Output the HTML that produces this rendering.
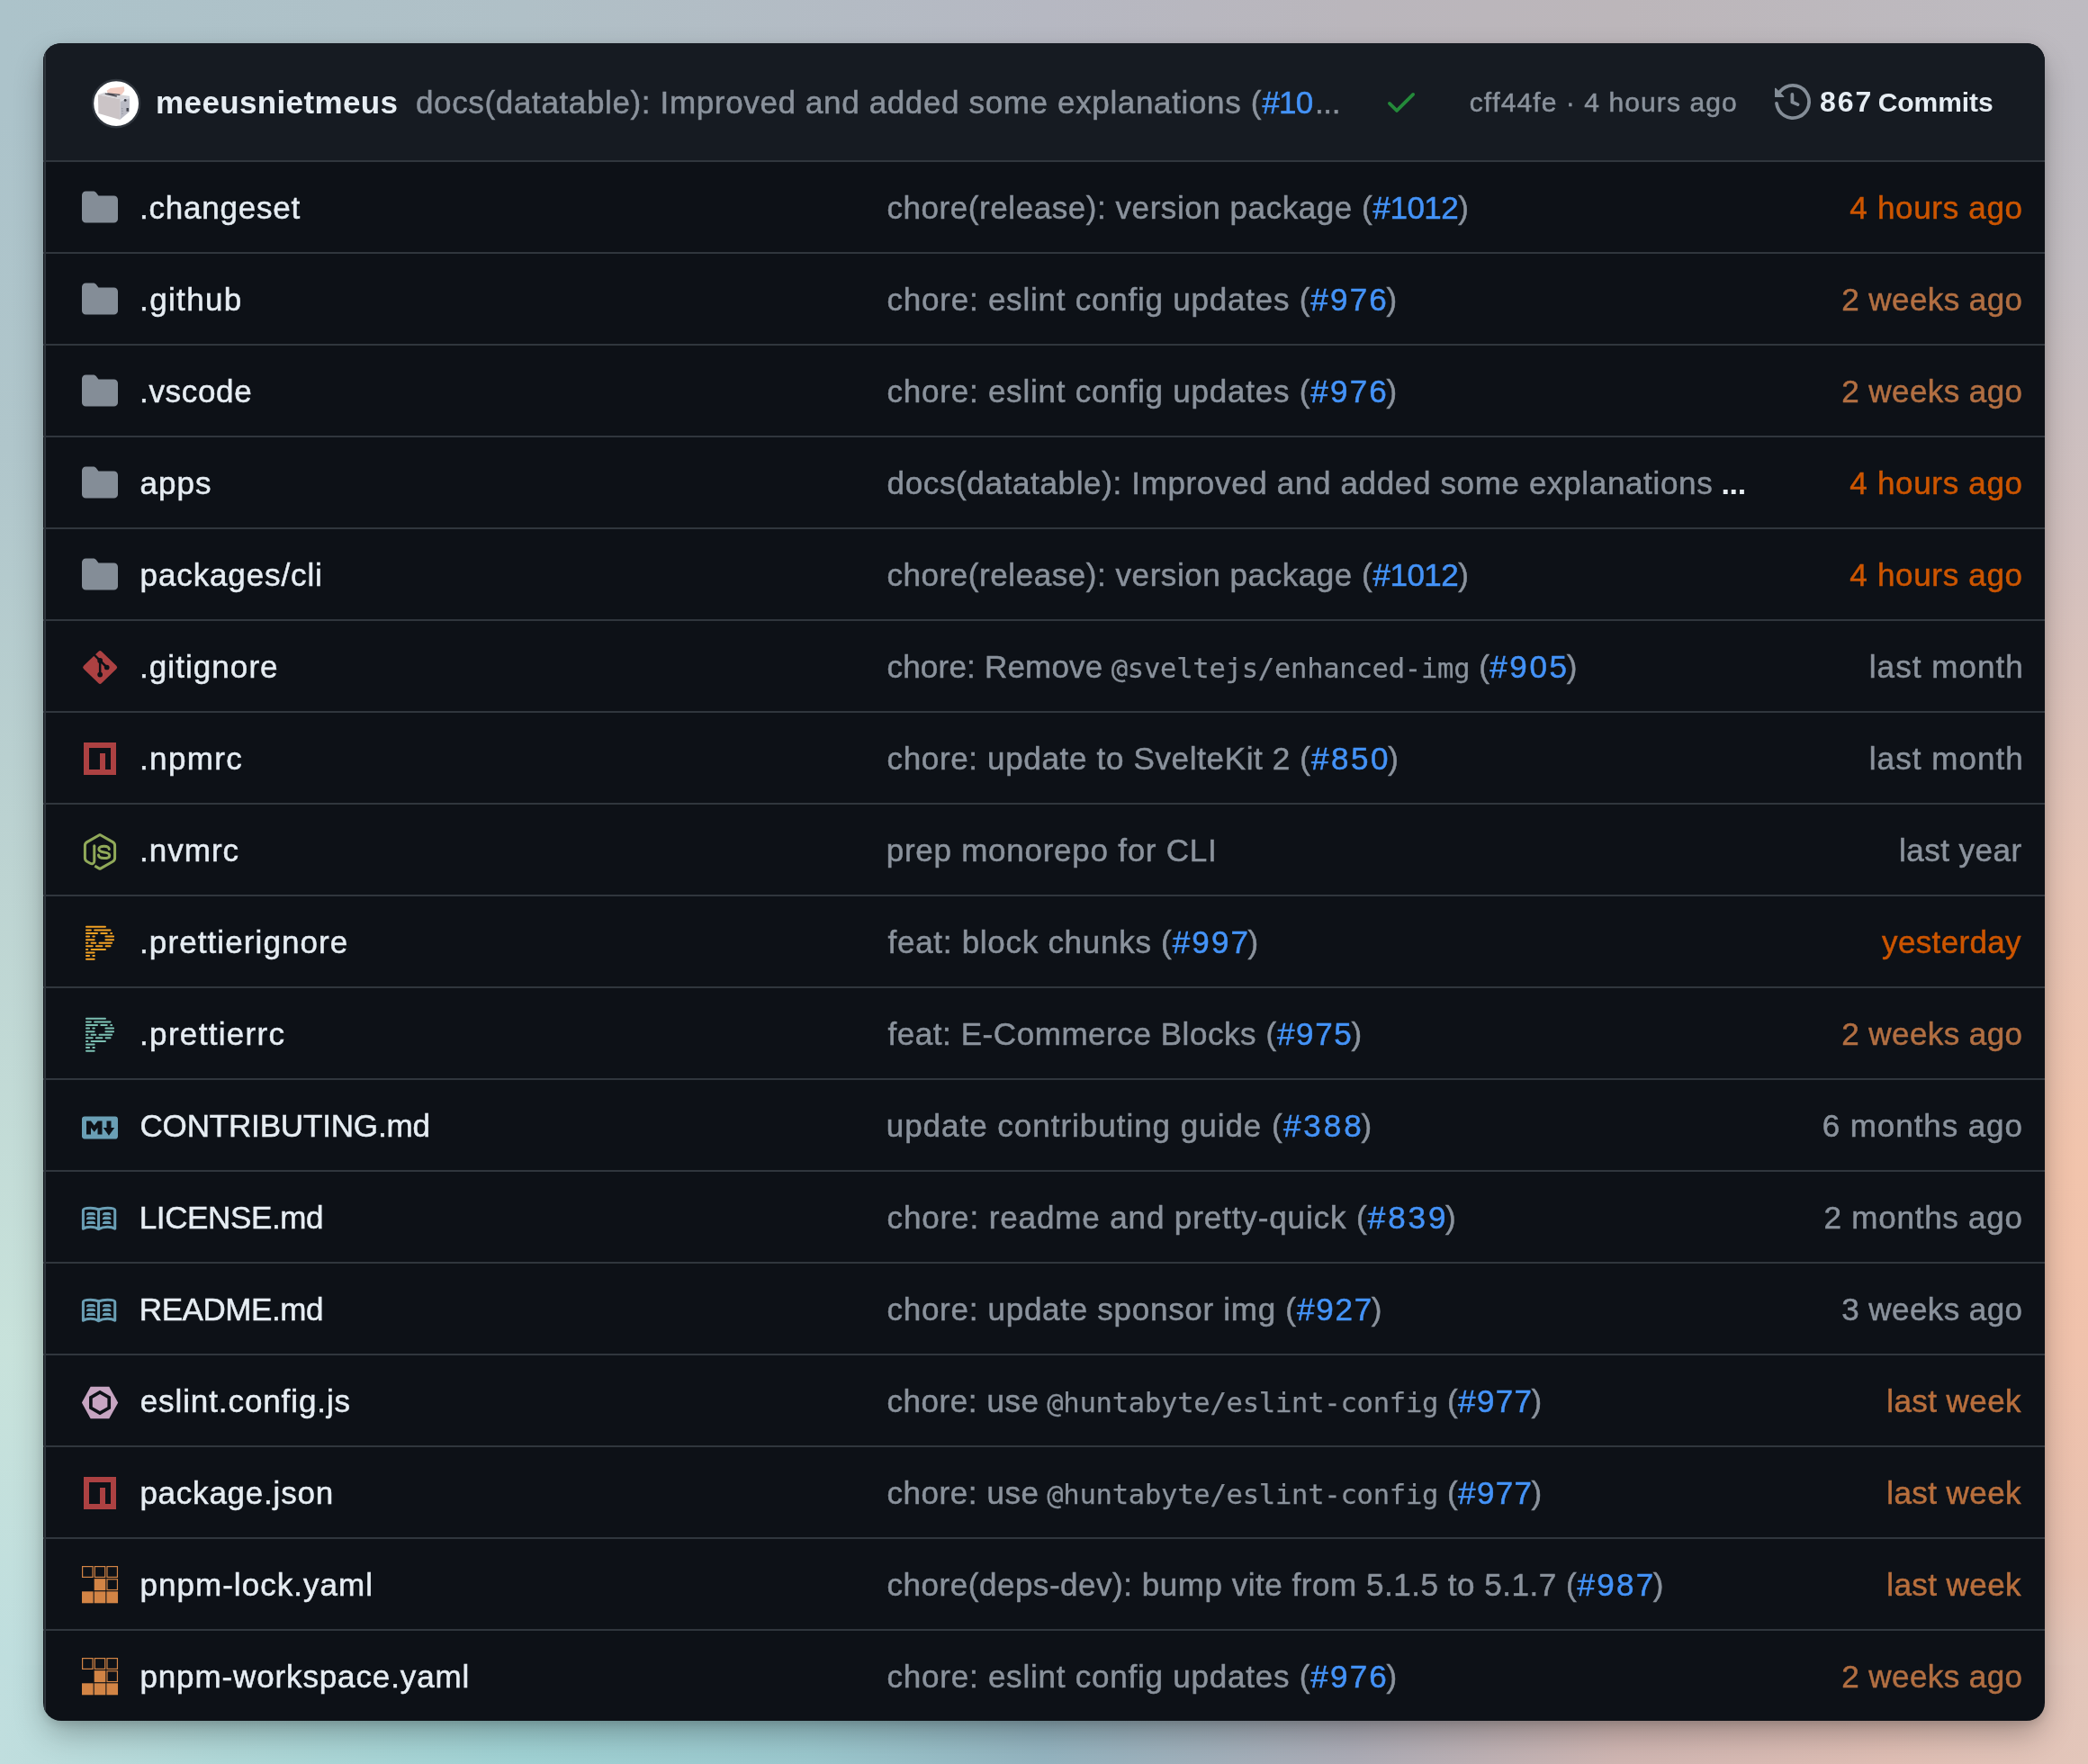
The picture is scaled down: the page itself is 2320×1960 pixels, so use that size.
<!DOCTYPE html>
<html lang="en"><head><meta charset="utf-8"><title>shadcn-svelte files</title>
<style>
html,body{margin:0;padding:0}
body{width:2320px;height:1960px;overflow:hidden;position:relative;font-family:"Liberation Sans",sans-serif;font-kerning:none;-webkit-font-smoothing:antialiased;
background-color:#b6bcc4;
background-image:
linear-gradient(to right,rgb(172,195,202) 0.0%,rgb(176,192,199) 25.0%,rgb(182,184,194) 50.0%,rgb(186,182,188) 64.7%,rgb(188,182,186) 77.6%,rgb(190,187,193) 100.0%),
linear-gradient(to right,rgb(192,222,222) 0.0%,rgb(176,216,216) 10.8%,rgb(160,210,212) 25.0%,rgb(155,200,206) 38.8%,rgb(148,180,192) 50.0%,rgb(172,172,182) 64.7%,rgb(208,182,178) 77.6%,rgb(223,190,180) 90.5%,rgb(227,198,186) 100.0%),
linear-gradient(to bottom,rgb(172,195,202) 0.0%,rgb(172,195,202) 5.9%,rgb(176,198,203) 25.5%,rgb(189,212,210) 50.0%,rgb(200,226,219) 76.5%,rgb(191,222,222) 94.1%,rgb(191,222,222) 100.0%),
linear-gradient(to bottom,rgb(190,187,193) 0.0%,rgb(190,187,193) 5.9%,rgb(196,190,194) 15.3%,rgb(210,192,190) 30.6%,rgb(232,197,182) 50.0%,rgb(242,196,172) 66.3%,rgb(240,194,172) 76.5%,rgb(232,193,176) 89.3%,rgb(227,198,186) 94.1%,rgb(227,198,186) 100.0%);
background-repeat:no-repeat;
background-size:100% 110px,100% 110px,120px 100%,120px 100%;
background-position:0 0,0 100%,0 0,100% 0;
}
.card{will-change:transform;position:absolute;left:48px;top:48px;width:2224px;height:1864px;border-radius:20px;background:#0d1117;overflow:hidden;box-shadow:0 16px 36px -4px rgba(0,0,0,.30),0 3px 12px rgba(0,0,0,.12)}
.card::before{content:"";position:absolute;left:1px;top:0;bottom:0;width:2px;background:#30363d;z-index:3}
.hdr{position:relative;height:130px;background:#161b22}
.row{position:relative;height:100px;border-top:2px solid #30363d;color:#8a929c}
.ic{position:absolute;display:block;overflow:visible}
.nm,.mg,.tm,.hn,.hm,.hs,.hc{position:absolute;top:1px;white-space:pre;font-size:35px;line-height:100px;height:100px;text-decoration:none}
.nm,.mg,.tm,.hm,.hs{-webkit-text-stroke:.5px}
.nm{color:#e6edf3}
.mg{color:#8a929c}
.lk{color:#4493f8;text-decoration:none}
.el{color:#e6edf3;font-weight:bold;font-size:34px;line-height:0;-webkit-text-stroke:0}
code{font-family:"DejaVu Sans Mono","Liberation Mono",monospace;font-size:30.5px;line-height:0;-webkit-text-stroke:.25px}
.hn{color:#e6edf3;font-weight:bold;top:16px}
.hm{color:#8a929c;top:16px}
.hs{color:#8a929c;font-size:30px;top:16px}
.hc{color:#e6edf3;font-size:30px;font-weight:bold;top:16px}
.dg{font-size:32px;line-height:0}
</style></head>
<body>
<div class="card">
<div class="hdr"><svg class="ic" style="left:52.8px;top:38.8px" width="56" height="56" viewBox="0 0 56 56"><circle cx="28.1" cy="28.1" r="26.1" fill="#fff" stroke="#2f353d" stroke-width="2.4"/><path d="M17.6 13.7L21.8 10.9L36.9 9.3L37.3 14.1L33.8 18.6L19 16.9Z" fill="#f2cdc2"/><path d="M7.9 18.3L15.5 15.8L42.9 19.7L32.7 23.2Z" fill="#d6d5d9"/><path d="M7.9 18.3L32.7 23.2L32.3 46.1L8.4 39Z" fill="#cbc4c6"/><path d="M32.7 23.2L42.9 19.7L42.9 36.9L32.3 46.1Z" fill="#b9bac4"/><path d="M32.7 23.4L42.9 19.9L42.9 22.3L32.7 25.9Z" fill="#d9dbe2"/><path d="M15.8 17.2L28.8 20M18.3 16.9L32.3 18.4" stroke="#4b4a52" stroke-width="1.3" fill="none"/><circle cx="38.2" cy="24.4" r="1.4" fill="#3b3d46"/><rect x="39.5" y="33" width="2.4" height="3.7" fill="#3f414a"/><path d="M34.8 33v1.2M35 35.8v1.2M35 38.6v1.2" stroke="#8e8f99" stroke-width="1.1"/></svg><a class="hn" style="left:125.09px;letter-spacing:0.36px;">meeusnietmeus</a><span class="hm" style="left:414.03px;"><span style="letter-spacing:0.64px">docs(datatable): Improved and added some explanations</span><span style="letter-spacing:0.76px"> (</span><a class="lk" style="letter-spacing:-0.79px;margin-left:0.25px">#10</a><span style="letter-spacing:-0.29px;margin-left:2.42px">...</span></span><svg class="ic" style="left:1488.7px;top:45px" width="40" height="40" viewBox="0 0 16 16"><path fill="#248a3a" d="M13.78 4.22a.75.75 0 0 1 0 1.06l-7.25 7.25a.75.75 0 0 1-1.06 0L2.22 9.28a.751.751 0 0 1 .018-1.042.751.751 0 0 1 1.042-.018L6 10.94l6.72-6.72a.75.75 0 0 1 1.06 0Z"/></svg><span class="hs" style="left:1584.73px;letter-spacing:1.09px;">cff44fe · 4 hours ago</span><svg class="ic" style="left:1924px;top:45px" width="40" height="40" viewBox="0 0 16 16"><path fill="#848d97" d="m.427 1.927 1.215 1.215a8.002 8.002 0 1 1-1.6 5.685.75.75 0 1 1 1.493-.154 6.5 6.5 0 1 0 1.18-4.458l1.358 1.358A.25.25 0 0 1 3.896 6H.25A.25.25 0 0 1 0 5.75V2.104a.25.25 0 0 1 .427-.177ZM7.75 4a.75.75 0 0 1 .75.75v2.992l2.028.812a.75.75 0 0 1-.557 1.392l-2.5-1A.751.751 0 0 1 7 8.25v-3.5A.75.75 0 0 1 7.75 4Z"/></svg><a class="hc" style="left:1973.88px;"><span class="dg" style="letter-spacing:1.97px">867</span><span style="letter-spacing:-2.84px"> </span><span style="letter-spacing:-0.06px">Commits</span></a></div>
<div class="row"><svg class="ic" style="left:43px;top:30.3px" width="40" height="40" viewBox="0 0 16 16"><path fill="#848d97" d="M1.75 1A1.75 1.75 0 0 0 0 2.75v10.5C0 14.216.784 15 1.75 15h12.5A1.75 1.75 0 0 0 16 13.25v-8.5A1.75 1.75 0 0 0 14.25 3H7.5a.25.25 0 0 1-.2-.1l-.9-1.2C6.07 1.26 5.55 1 5 1H1.75Z"/></svg><a class="nm" style="left:107.05px;letter-spacing:0.76px;">.changeset</a><span class="mg" style="left:937.51px;"><span style="letter-spacing:0.56px">chore(release): version package (</span><a class="lk" style="letter-spacing:-0.55px;margin-left:0.25px">#1012</a><span style="letter-spacing:-0.55px;margin-left:0.01px">)</span></span><span class="tm" style="left:2007.35px;color:#cc5500;letter-spacing:0.68px;">4 hours ago</span></div>
<div class="row"><svg class="ic" style="left:43px;top:30.3px" width="40" height="40" viewBox="0 0 16 16"><path fill="#848d97" d="M1.75 1A1.75 1.75 0 0 0 0 2.75v10.5C0 14.216.784 15 1.75 15h12.5A1.75 1.75 0 0 0 16 13.25v-8.5A1.75 1.75 0 0 0 14.25 3H7.5a.25.25 0 0 1-.2-.1l-.9-1.2C6.07 1.26 5.55 1 5 1H1.75Z"/></svg><a class="nm" style="left:107.05px;letter-spacing:1.36px;">.github</a><span class="mg" style="left:937.51px;"><span style="letter-spacing:0.77px">chore: eslint config updates (</span><a class="lk" style="letter-spacing:2.21px;margin-left:0.25px">#976</a><span style="letter-spacing:2.21px;margin-left:-2.53px">)</span></span><span class="tm" style="left:1998.29px;color:#b26f42;letter-spacing:0.42px;">2 weeks ago</span></div>
<div class="row"><svg class="ic" style="left:43px;top:30.3px" width="40" height="40" viewBox="0 0 16 16"><path fill="#848d97" d="M1.75 1A1.75 1.75 0 0 0 0 2.75v10.5C0 14.216.784 15 1.75 15h12.5A1.75 1.75 0 0 0 16 13.25v-8.5A1.75 1.75 0 0 0 14.25 3H7.5a.25.25 0 0 1-.2-.1l-.9-1.2C6.07 1.26 5.55 1 5 1H1.75Z"/></svg><a class="nm" style="left:107.05px;letter-spacing:0.66px;">.vscode</a><span class="mg" style="left:937.51px;"><span style="letter-spacing:0.77px">chore: eslint config updates (</span><a class="lk" style="letter-spacing:2.21px;margin-left:0.25px">#976</a><span style="letter-spacing:2.21px;margin-left:-2.53px">)</span></span><span class="tm" style="left:1998.29px;color:#b26f42;letter-spacing:0.42px;">2 weeks ago</span></div>
<div class="row"><svg class="ic" style="left:43px;top:30.3px" width="40" height="40" viewBox="0 0 16 16"><path fill="#848d97" d="M1.75 1A1.75 1.75 0 0 0 0 2.75v10.5C0 14.216.784 15 1.75 15h12.5A1.75 1.75 0 0 0 16 13.25v-8.5A1.75 1.75 0 0 0 14.25 3H7.5a.25.25 0 0 1-.2-.1l-.9-1.2C6.07 1.26 5.55 1 5 1H1.75Z"/></svg><a class="nm" style="left:107.46px;letter-spacing:1.05px;">apps</a><span class="mg" style="left:937.53px;"><span style="letter-spacing:0.65px">docs(datatable): Improved and added some explanations</span><span style="letter-spacing:-0.59px"> </span><span class="el" style="letter-spacing:-0.35px">...</span></span><span class="tm" style="left:2007.35px;color:#cc5500;letter-spacing:0.68px;">4 hours ago</span></div>
<div class="row"><svg class="ic" style="left:43px;top:30.3px" width="40" height="40" viewBox="0 0 16 16"><path fill="#848d97" d="M1.75 1A1.75 1.75 0 0 0 0 2.75v10.5C0 14.216.784 15 1.75 15h12.5A1.75 1.75 0 0 0 16 13.25v-8.5A1.75 1.75 0 0 0 14.25 3H7.5a.25.25 0 0 1-.2-.1l-.9-1.2C6.07 1.26 5.55 1 5 1H1.75Z"/></svg><a class="nm" style="left:107.59px;letter-spacing:0.88px;">packages/cli</a><span class="mg" style="left:937.51px;"><span style="letter-spacing:0.56px">chore(release): version package (</span><a class="lk" style="letter-spacing:-0.55px;margin-left:0.25px">#1012</a><span style="letter-spacing:-0.55px;margin-left:0.01px">)</span></span><span class="tm" style="left:2007.35px;color:#cc5500;letter-spacing:0.68px;">4 hours ago</span></div>
<div class="row"><svg class="ic" style="left:43px;top:30px" width="40" height="42" viewBox="0 0 40 42"><rect x="-14.15" y="-14.15" width="28.3" height="28.3" rx="2.6" fill="#ac4142" transform="translate(20.15 21.5) scale(1 .965) rotate(45)"/><path d="M13.55 7.3 L27.7 21.5 M20.15 13.95 L20.15 29.6" stroke="#0d1117" stroke-width="2.5" fill="none"/><circle cx="20.15" cy="13.95" r="2.85" fill="#0d1117"/><circle cx="27.7" cy="21.5" r="2.85" fill="#0d1117"/><circle cx="20.15" cy="29.6" r="2.85" fill="#0d1117"/></svg><a class="nm" style="left:107.05px;letter-spacing:1.06px;">.gitignore</a><span class="mg" style="left:937.51px;"><span style="letter-spacing:0.2px">chore: Remove</span><span style="letter-spacing:-0.63px"> </span><code style="letter-spacing:-0.24px;margin-left:0.12px">@sveltejs/enhanced-img</code><span style="letter-spacing:0.14px"> (</span><a class="lk" style="letter-spacing:2.59px;margin-left:0.25px">#905</a><span style="letter-spacing:2.59px;margin-left:-2.84px">)</span></span><span class="tm" style="left:2028.79px;color:#8a929c;letter-spacing:1.06px;">last month</span></div>
<div class="row"><svg class="ic" style="left:45.1px;top:33.4px" width="36" height="36" viewBox="0 0 36 36"><path fill="#ac4142" fill-rule="evenodd" d="M0 0h36v36H0zM6 6v24h12V12h6v18h6V6z"/></svg><a class="nm" style="left:107.05px;letter-spacing:1.33px;">.npmrc</a><span class="mg" style="left:937.51px;"><span style="letter-spacing:0.66px">chore: update to SvelteKit 2 (</span><a class="lk" style="letter-spacing:2.52px;margin-left:0.25px">#850</a><span style="letter-spacing:2.52px;margin-left:-2.67px">)</span></span><span class="tm" style="left:2028.79px;color:#8a929c;letter-spacing:1.06px;">last month</span></div>
<div class="row"><svg class="ic" style="left:43px;top:30px" width="40" height="45" viewBox="0 0 40 45"><g transform="translate(20 22.4)" fill="none" stroke="#90a959" stroke-width="3" stroke-linejoin="round"><path d="M-5.70 15.70 L-0.52 18.70 Q0.00 19.00 0.52 18.70 L14.34 10.79 Q16.60 9.50 16.60 6.90 L16.60 -6.90 Q16.60 -9.50 14.34 -10.79 L0.52 -18.70 Q0.00 -19.00 -0.52 -18.70 L-14.34 -10.79 Q-16.60 -9.50 -16.60 -6.90 L-16.60 6.90 Q-16.60 9.50 -14.35 10.80 L -10.8 12.86 C -8.6 14.1 -6.2 13.2 -6.2 10 L -6.2 -6.4"/><path d="M 10.3 -2.9 C 10.1 -5.2 7.9 -6.2 4.6 -6.2 C 1.3 -6.2 -1.2 -5.1 -1.2 -2.9 C -1.2 -0.6 1 0 4.6 0.5 C 8.4 1 10.7 1.7 10.7 4 C 10.7 6.2 8.3 7.2 4.6 7.2 C 1 7.2 -1.5 6.1 -1.6 3.5" stroke-linecap="round"/><circle cx="-6.2" cy="-6.6" r="1.5" fill="#90a959" stroke="none"/></g></svg><a class="nm" style="left:107.05px;letter-spacing:1px;">.nvmrc</a><span class="mg" style="left:936.74px;letter-spacing:0.74px;">prep monorepo for CLI</span><span class="tm" style="left:2061.99px;color:#8a929c;letter-spacing:0.48px;">last year</span></div>
<div class="row"><svg class="ic" style="left:43px;top:30px" width="40" height="42" viewBox="0 0 40 42"><path d="M4.98 3.84H26.00M4.98 7.42H9.92M14.11 7.42H31.55M4.98 11.01H17.07M21.25 11.01H27.78M32.16 11.01H33.14M4.98 14.59H8.14M12.32 14.59H13.89M26.41 14.59H35.12M4.98 18.17H13.69M26.41 18.17H35.12M4.98 21.76H6.35M10.54 21.76H15.28M19.47 21.76H33.14M4.98 25.34H11.71M15.89 25.34H22.42M26.61 25.34H31.55M4.98 28.92H6.35M10.54 28.92H26.00M4.98 32.51H13.69M4.98 36.09H8.14M12.32 36.09H13.89M4.98 39.67H13.69" stroke="#f2a124" stroke-width="1.95" stroke-linecap="round" fill="none"/></svg><a class="nm" style="left:107.05px;letter-spacing:1.09px;">.prettierignore</a><span class="mg" style="left:938.5px;"><span style="letter-spacing:0.72px">feat: block chunks (</span><a class="lk" style="letter-spacing:2.15px;margin-left:0.25px">#997</a><span style="letter-spacing:2.15px;margin-left:-2.7px">)</span></span><span class="tm" style="left:2043.06px;color:#cc5500;letter-spacing:0.35px;">yesterday</span></div>
<div class="row"><svg class="ic" style="left:43px;top:30px" width="40" height="42" viewBox="0 0 40 42"><path d="M4.98 3.84H26.00M4.98 7.42H9.92M14.11 7.42H31.55M4.98 11.01H17.07M21.25 11.01H27.78M32.16 11.01H33.14M4.98 14.59H8.14M12.32 14.59H13.89M26.41 14.59H35.12M4.98 18.17H13.69M26.41 18.17H35.12M4.98 21.76H6.35M10.54 21.76H15.28M19.47 21.76H33.14M4.98 25.34H11.71M15.89 25.34H22.42M26.61 25.34H31.55M4.98 28.92H6.35M10.54 28.92H26.00M4.98 32.51H13.69M4.98 36.09H8.14M12.32 36.09H13.89M4.98 39.67H13.69" stroke="#7cc0b3" stroke-width="1.95" stroke-linecap="round" fill="none"/></svg><a class="nm" style="left:107.05px;letter-spacing:1.32px;">.prettierrc</a><span class="mg" style="left:938.5px;"><span style="letter-spacing:0.56px">feat: E-Commerce Blocks (</span><a class="lk" style="letter-spacing:1.65px;margin-left:0.25px">#975</a><span style="letter-spacing:1.65px;margin-left:-1.91px">)</span></span><span class="tm" style="left:1998.29px;color:#b26f42;letter-spacing:0.42px;">2 weeks ago</span></div>
<div class="row"><svg class="ic" style="left:43px;top:33px" width="40" height="40" viewBox="0 0 16 16"><path fill="#6a9fb5" fill-rule="evenodd" d="M14.85 3H1.15C.52 3 0 3.52 0 4.15v7.69C0 12.48.52 13 1.15 13h13.69c.64 0 1.15-.52 1.15-1.15v-7.7C16 3.52 15.48 3 14.85 3zM9 11H7V8L5.5 9.92 4 8v3H2V5h2l1.5 2L7 5h2v6zm2.99.5L9.5 8H11V5h2v3h1.5l-2.51 3.5z"/></svg><a class="nm" style="left:107.47px;letter-spacing:-0.16px;">CONTRIBUTING.md</a><span class="mg" style="left:936.73px;"><span style="letter-spacing:0.98px">update contributing guide (</span><a class="lk" style="letter-spacing:2.97px;margin-left:0.25px">#388</a><span style="letter-spacing:2.97px;margin-left:-3.28px">)</span></span><span class="tm" style="left:1976.77px;color:#8a929c;letter-spacing:0.92px;">6 months ago</span></div>
<div class="row"><svg class="ic" style="left:42px;top:36px" width="42" height="32" viewBox="0 0 42 32"><path d="M2.38 27.25 V6.69 Q2.38 4.16 10.63 4.16 Q16.19 4.16 19.56 5.83 V27.65 Q16.19 25.27 10.63 25.27 Q5.08 25.27 2.38 27.25 Z M37.74 27.25 V6.69 Q37.74 4.16 29.48 4.16 Q23.73 4.16 19.56 5.83 V27.65 Q23.73 25.27 29.48 25.27 Q34.84 25.27 37.74 27.25 Z" fill="none" stroke="#6a9fb5" stroke-width="3" stroke-linejoin="round"/><path d="M5.87 12.13 Q6.37 8.88 8.87 8.88 H13.19 Q15.69 8.88 16.19 12.13 Z" fill="#6a9fb5"/><path d="M5.87 17.10 Q6.37 13.84 8.87 13.84 H13.19 Q15.69 13.84 16.19 17.10 Z" fill="#6a9fb5"/><path d="M5.87 22.06 Q6.37 18.80 8.87 18.80 H13.19 Q15.69 18.80 16.19 22.06 Z" fill="#6a9fb5"/><path d="M23.73 12.13 Q24.23 8.88 26.73 8.88 H30.57 Q33.07 8.88 33.57 12.13 Z" fill="#6a9fb5"/><path d="M23.73 17.10 Q24.23 13.84 26.73 13.84 H30.57 Q33.07 13.84 33.57 17.10 Z" fill="#6a9fb5"/><path d="M23.73 22.06 Q24.23 18.80 26.73 18.80 H30.57 Q33.07 18.80 33.57 22.06 Z" fill="#6a9fb5"/></svg><a class="nm" style="left:106.78px;letter-spacing:-0.37px;">LICENSE.md</a><span class="mg" style="left:937.51px;"><span style="letter-spacing:0.88px">chore: readme and pretty-quick (</span><a class="lk" style="letter-spacing:2.98px;margin-left:0.25px">#839</a><span style="letter-spacing:2.98px;margin-left:-3.43px">)</span></span><span class="tm" style="left:1978.59px;color:#8a929c;letter-spacing:0.76px;">2 months ago</span></div>
<div class="row"><svg class="ic" style="left:42px;top:36px" width="42" height="32" viewBox="0 0 42 32"><path d="M2.38 27.25 V6.69 Q2.38 4.16 10.63 4.16 Q16.19 4.16 19.56 5.83 V27.65 Q16.19 25.27 10.63 25.27 Q5.08 25.27 2.38 27.25 Z M37.74 27.25 V6.69 Q37.74 4.16 29.48 4.16 Q23.73 4.16 19.56 5.83 V27.65 Q23.73 25.27 29.48 25.27 Q34.84 25.27 37.74 27.25 Z" fill="none" stroke="#6a9fb5" stroke-width="3" stroke-linejoin="round"/><path d="M5.87 12.13 Q6.37 8.88 8.87 8.88 H13.19 Q15.69 8.88 16.19 12.13 Z" fill="#6a9fb5"/><path d="M5.87 17.10 Q6.37 13.84 8.87 13.84 H13.19 Q15.69 13.84 16.19 17.10 Z" fill="#6a9fb5"/><path d="M5.87 22.06 Q6.37 18.80 8.87 18.80 H13.19 Q15.69 18.80 16.19 22.06 Z" fill="#6a9fb5"/><path d="M23.73 12.13 Q24.23 8.88 26.73 8.88 H30.57 Q33.07 8.88 33.57 12.13 Z" fill="#6a9fb5"/><path d="M23.73 17.10 Q24.23 13.84 26.73 13.84 H30.57 Q33.07 13.84 33.57 17.10 Z" fill="#6a9fb5"/><path d="M23.73 22.06 Q24.23 18.80 26.73 18.80 H30.57 Q33.07 18.80 33.57 22.06 Z" fill="#6a9fb5"/></svg><a class="nm" style="left:106.78px;letter-spacing:-0.41px;">README.md</a><span class="mg" style="left:937.51px;"><span style="letter-spacing:0.72px">chore: update sponsor img (</span><a class="lk" style="letter-spacing:1.82px;margin-left:0.25px">#927</a><span style="letter-spacing:1.82px;margin-left:-2.36px">)</span></span><span class="tm" style="left:1998.32px;color:#8a929c;letter-spacing:0.42px;">3 weeks ago</span></div>
<div class="row"><svg class="ic" style="left:42px;top:30px" width="42" height="42" viewBox="0 0 42 42"><path d="M0.91 22.50 L10.63 4.64 L31.27 4.64 L41.19 22.50 L31.27 40.16 L10.63 40.16Z" fill="#c7a5c2"/><path d="M21.03 8.81 L33.06 15.63 L33.06 29.25 L21.03 36.19 L9.05 29.25 L9.05 15.63Z" fill="#0d1117"/><path d="M21.03 13.02 L29.37 17.74 L29.37 27.14 L21.03 31.94 L12.74 27.14 L12.74 17.74Z" fill="#c7a5c2"/></svg><a class="nm" style="left:107.76px;letter-spacing:0.9px;">eslint.config.js</a><span class="mg" style="left:937.51px;"><span style="letter-spacing:0.56px">chore: use</span><span style="letter-spacing:-1.19px"> </span><code style="letter-spacing:-0.24px;margin-left:0.12px">@huntabyte/eslint-config</code><span style="letter-spacing:0.14px"> (</span><a class="lk" style="letter-spacing:1.38px;margin-left:0.25px">#977</a><span style="letter-spacing:1.38px;margin-left:-1.93px">)</span></span><span class="tm" style="left:2048.19px;color:#b86f3d;letter-spacing:0.43px;">last week</span></div>
<div class="row"><svg class="ic" style="left:45.1px;top:33.4px" width="36" height="36" viewBox="0 0 36 36"><path fill="#ac4142" fill-rule="evenodd" d="M0 0h36v36H0zM6 6v24h12V12h6v18h6V6z"/></svg><a class="nm" style="left:107.39px;letter-spacing:0.77px;">package.json</a><span class="mg" style="left:937.51px;"><span style="letter-spacing:0.56px">chore: use</span><span style="letter-spacing:-1.19px"> </span><code style="letter-spacing:-0.24px;margin-left:0.12px">@huntabyte/eslint-config</code><span style="letter-spacing:0.14px"> (</span><a class="lk" style="letter-spacing:1.38px;margin-left:0.25px">#977</a><span style="letter-spacing:1.38px;margin-left:-1.93px">)</span></span><span class="tm" style="left:2048.19px;color:#b86f3d;letter-spacing:0.43px;">last week</span></div>
<div class="row"><svg class="ic" style="left:42.9px;top:29.9px" width="40.4" height="41.2" viewBox="0 0 40.4 41.2"><rect x="0.60" y="0.60" width="11.45" height="11.80" fill="none" stroke="#d28445" stroke-width="1.2"/><rect x="14.30" y="0.60" width="11.45" height="11.80" fill="none" stroke="#d28445" stroke-width="1.2"/><rect x="28.00" y="0.60" width="11.45" height="11.80" fill="none" stroke="#d28445" stroke-width="1.2"/><rect x="13.70" y="14.15" width="12.65" height="13.00" fill="#d28445"/><rect x="28.00" y="14.75" width="11.45" height="11.80" fill="none" stroke="#d28445" stroke-width="1.2"/><rect x="0.00" y="28.30" width="12.65" height="13.00" fill="#d28445"/><rect x="13.70" y="28.30" width="12.65" height="13.00" fill="#d28445"/><rect x="27.40" y="28.30" width="12.65" height="13.00" fill="#d28445"/></svg><a class="nm" style="left:107.39px;letter-spacing:1.05px;">pnpm-lock.yaml</a><span class="mg" style="left:937.51px;"><span style="letter-spacing:0.53px">chore(deps-dev): bump vite from 5.1.5 to 5.1.7 (</span><a class="lk" style="letter-spacing:2.35px;margin-left:0.25px">#987</a><span style="letter-spacing:2.35px;margin-left:-2.9px">)</span></span><span class="tm" style="left:2048.19px;color:#b86f3d;letter-spacing:0.43px;">last week</span></div>
<div class="row"><svg class="ic" style="left:42.9px;top:29.9px" width="40.4" height="41.2" viewBox="0 0 40.4 41.2"><rect x="0.60" y="0.60" width="11.45" height="11.80" fill="none" stroke="#d28445" stroke-width="1.2"/><rect x="14.30" y="0.60" width="11.45" height="11.80" fill="none" stroke="#d28445" stroke-width="1.2"/><rect x="28.00" y="0.60" width="11.45" height="11.80" fill="none" stroke="#d28445" stroke-width="1.2"/><rect x="13.70" y="14.15" width="12.65" height="13.00" fill="#d28445"/><rect x="28.00" y="14.75" width="11.45" height="11.80" fill="none" stroke="#d28445" stroke-width="1.2"/><rect x="0.00" y="28.30" width="12.65" height="13.00" fill="#d28445"/><rect x="13.70" y="28.30" width="12.65" height="13.00" fill="#d28445"/><rect x="27.40" y="28.30" width="12.65" height="13.00" fill="#d28445"/></svg><a class="nm" style="left:107.39px;letter-spacing:0.88px;">pnpm-workspace.yaml</a><span class="mg" style="left:937.51px;"><span style="letter-spacing:0.77px">chore: eslint config updates (</span><a class="lk" style="letter-spacing:2.21px;margin-left:0.25px">#976</a><span style="letter-spacing:2.21px;margin-left:-2.53px">)</span></span><span class="tm" style="left:1998.29px;color:#b26f42;letter-spacing:0.42px;">2 weeks ago</span></div>
</div>
</body></html>
